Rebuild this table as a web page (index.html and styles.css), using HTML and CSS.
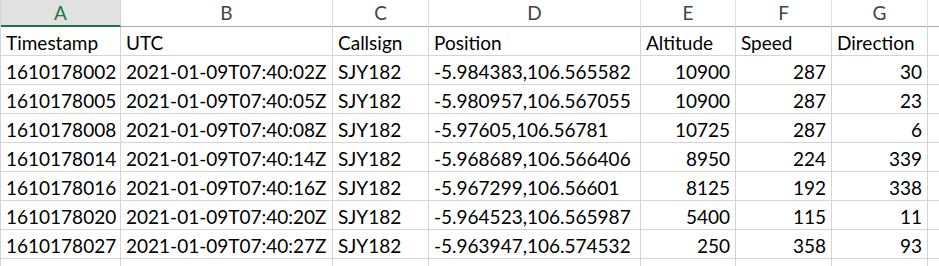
FILE: index.html
```html
<!DOCTYPE html>
<html>
<head>
<meta charset="utf-8">
<link rel="stylesheet" href="styles.css">
</head>
<body>
<div class="sheet">
  <div class="hdr sel">A</div><div class="hdr">B</div><div class="hdr">C</div><div class="hdr">D</div><div class="hdr">E</div><div class="hdr">F</div><div class="hdr">G</div><div class="hdr last"></div>

  <div class="c">Timestamp</div><div class="c">UTC</div><div class="c">Callsign</div><div class="c">Position</div><div class="c">Altitude</div><div class="c">Speed</div><div class="c">Direction</div><div class="c last"></div>

  <div class="c">1610178002</div><div class="c">2021-01-09T07:40:02Z</div><div class="c">SJY182</div><div class="c">-5.984383,106.565582</div><div class="c n">10900</div><div class="c n">287</div><div class="c n">30</div><div class="c last"></div>

  <div class="c">1610178005</div><div class="c">2021-01-09T07:40:05Z</div><div class="c">SJY182</div><div class="c">-5.980957,106.567055</div><div class="c n">10900</div><div class="c n">287</div><div class="c n">23</div><div class="c last"></div>

  <div class="c">1610178008</div><div class="c">2021-01-09T07:40:08Z</div><div class="c">SJY182</div><div class="c">-5.97605,106.56781</div><div class="c n">10725</div><div class="c n">287</div><div class="c n">6</div><div class="c last"></div>

  <div class="c">1610178014</div><div class="c">2021-01-09T07:40:14Z</div><div class="c">SJY182</div><div class="c">-5.968689,106.566406</div><div class="c n">8950</div><div class="c n">224</div><div class="c n">339</div><div class="c last"></div>

  <div class="c">1610178016</div><div class="c">2021-01-09T07:40:16Z</div><div class="c">SJY182</div><div class="c">-5.967299,106.56601</div><div class="c n">8125</div><div class="c n">192</div><div class="c n">338</div><div class="c last"></div>

  <div class="c">1610178020</div><div class="c">2021-01-09T07:40:20Z</div><div class="c">SJY182</div><div class="c">-5.964523,106.565987</div><div class="c n">5400</div><div class="c n">115</div><div class="c n">11</div><div class="c last"></div>

  <div class="c">1610178027</div><div class="c">2021-01-09T07:40:27Z</div><div class="c">SJY182</div><div class="c">-5.963947,106.574532</div><div class="c n">250</div><div class="c n">358</div><div class="c n">93</div><div class="c last"></div>

  <div class="c tail"></div><div class="c tail"></div><div class="c tail"></div><div class="c tail"></div><div class="c tail"></div><div class="c tail"></div><div class="c tail"></div><div class="c tail last"></div>
</div>
</body>
</html>
```
FILE: styles.css
```css
html, body {
  margin: 0;
  padding: 0;
  background: #ffffff;
  overflow: hidden;
}

.sheet {
  display: grid;
  grid-template-columns: 120px 212px 96px 212px 95px 96px 96px 1fr;
  grid-template-rows: 27px repeat(8, 29px) 7px;
  width: 939px;
  height: 266px;
  border-left: 1px solid #d4d4d4;
  box-sizing: border-box;
  font-family: "Lato", "Liberation Sans", sans-serif;
  font-size: 19px;
  color: #000000;
}

.hdr {
  box-sizing: border-box;
  border-right: 1px solid #e1e1e1;
  border-bottom: 1px solid #ababab;
  text-align: center;
  color: #444444;
  line-height: 25px;
}

.hdr.sel {
  background: #e1e1e1;
  color: #217346;
  border-bottom: 2px solid #217346;
  border-right-color: #d4d4d4;
}

.c {
  box-sizing: border-box;
  border-right: 1px solid #d4d4d4;
  border-bottom: 1px solid #d4d4d4;
  padding: 0 4px 0 5px;
  white-space: nowrap;
  overflow: hidden;
  display: flex;
  align-items: flex-end;
  line-height: 25px;
}

.c.n {
  justify-content: flex-end;
  padding-right: 5px;
}

.c.tail {
  border-bottom: none;
}

.last {
  border-right: none;
}
```
